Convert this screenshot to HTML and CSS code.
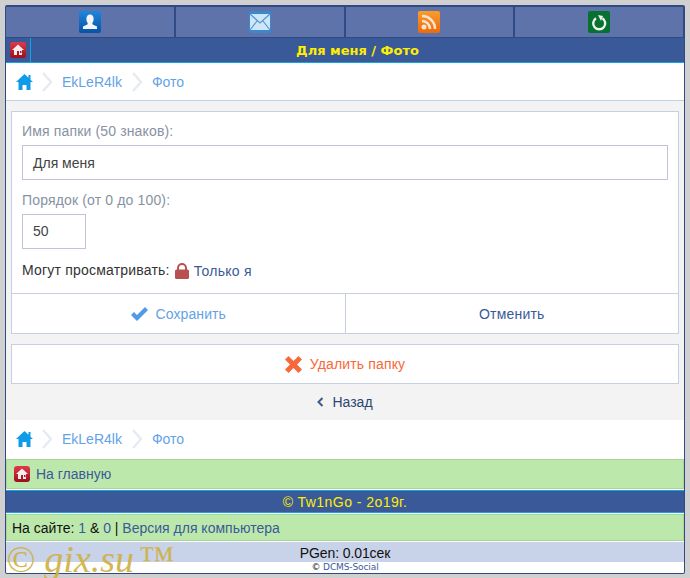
FILE: index.html
```html
<!DOCTYPE html>
<html lang="ru">
<head>
    <meta charset="UTF-8">
    <title>Для меня / Фото</title>
    <link rel="stylesheet" href="styles.css">
</head>
<body>
    <div class="wrapper">
        <div class="top-nav">
            <a class="top-tab">
                <svg width="22" height="22" viewBox="0 0 22 22"><defs><linearGradient id="gUser" x1="0" y1="0" x2="0" y2="1"><stop offset="0" stop-color="#1f86dc"/><stop offset="1" stop-color="#0752a4"/></linearGradient></defs><rect width="22" height="22" rx="2" fill="url(#gUser)"/><ellipse cx="11" cy="8" rx="3.600" ry="4.500" fill="#f4f4f4"/><path d="M9 11h4l.6 2.500 4.400 2v2.500H4v-2.500l4.400-2z" fill="#f4f4f4"/></svg>
            </a>
            <a class="top-tab">
                <svg width="22" height="22" viewBox="0 0 22 22"><rect width="22" height="22" rx="2" fill="#3d87cc"/><rect x="1" y="3" width="20" height="16" fill="#cfe6f8"/><path d="M1 3l10 9 10-9M1 19l7-9M21 19l-7-9" fill="none" stroke="#4f97d8" stroke-width="1.2"/></svg>
            </a>
            <a class="top-tab">
                <svg width="22" height="22" viewBox="0 0 22 22"><defs><linearGradient id="gRss" x1="0" y1="0" x2="0" y2="1"><stop offset="0" stop-color="#fb9c2c"/><stop offset="1" stop-color="#ee6a08"/></linearGradient></defs><rect width="22" height="22" rx="2" fill="url(#gRss)"/><circle cx="6" cy="16" r="2.500" fill="#f4e4d4"/><path d="M4 10a8 8 0 0 1 8 8M4 5a13 13 0 0 1 13 13" fill="none" stroke="#f4e4d4" stroke-width="2.600"/></svg>
            </a>
            <a class="top-tab">
                <svg width="22" height="22" viewBox="0 0 22 22"><rect width="22" height="22" rx="2" fill="#077230"/><path d="M8 7.200a6 6 0 1 0 6.400 0" fill="none" stroke="#eef2ee" stroke-width="2.400"/><path d="M10 4l5 1-2 5z" fill="#eef2ee"/></svg>
            </a>
        </div>
        <div class="title-bar">
            <a class="title-home">
                <svg class="home-icon" width="16" height="16" viewBox="0 0 16 16"><defs><linearGradient id="gHome" x1="0" y1="0" x2="0" y2="1"><stop offset="0" stop-color="#e23a48"/><stop offset="1" stop-color="#9c0f1c"/></linearGradient></defs><rect width="16" height="16" rx="3" fill="url(#gHome)"/><path d="M8 2.500L2 8h2v5h8V8h2z" fill="#f6eeee"/><rect x="7" y="9" width="2" height="4" fill="#b5141f"/><rect x="10" y="9" width="1.500" height="2" fill="#b5141f"/></svg>
            </a>
            <div class="title-text">Для меня / Фото</div>
        </div>
        <div class="crumbs crumbs-top">
            <svg class="crumb-home" width="17" height="16" viewBox="0 0 17 16"><path d="M8.500 0L0 8h2.500v8h4v-5h4v5h4V8H17l-2.500-2.300V1h-2v2.800z" fill="#0f9be8"/></svg>
            <svg class="crumb-sep" width="10" height="20" viewBox="0 0 10 20"><path d="M1 1l8 9-8 9" fill="none" stroke="#e4ebf2" stroke-width="2.400"/></svg>
            <a class="crumb-link">EkLeR4lk</a>
            <svg class="crumb-sep" width="10" height="20" viewBox="0 0 10 20"><path d="M1 1l8 9-8 9" fill="none" stroke="#e4ebf2" stroke-width="2.400"/></svg>
            <a class="crumb-link">Фото</a>
        </div>
        <div class="content">
            <div class="card">
                <div class="fields">
                    <label class="field-label">Имя папки (50 знаков):</label>
                    <div class="input input-wide">Для меня</div>
                    <label class="field-label">Порядок (от 0 до 100):</label>
                    <div class="input input-small">50</div>
                    <div class="access">
                        <span class="access-label">Могут просматривать:</span>
                        <svg class="lock" width="14" height="16" viewBox="0 0 14 16"><path d="M3 7V5a4 4 0 0 1 8 0v2" fill="none" stroke="#b75050" stroke-width="2"/><rect y="6.500" width="14" height="9.500" rx="1.500" fill="#b75050"/></svg>
                        <a class="access-link">Только я</a>
                    </div>
                </div>
                <div class="actions">
                    <a class="action action-save">
                        <svg width="17" height="14" viewBox="0 0 17 14"><path d="M0 8l3-3 3 3 8-8 3 3-11 11z" fill="#4f9be8"/></svg>
                        Сохранить
                    </a>
                    <a class="action action-cancel">Отменить</a>
                </div>
            </div>
            <a class="delete-btn">
                <svg width="17" height="17" viewBox="0 0 17 17"><path d="M3.500 0L8.500 5l5-5L17 3.500l-5 5 5 5-3.500 3.500-5-5-5 5L0 13.500l5-5-5-5z" fill="#f8683a"/></svg>
                Удалить папку
            </a>
            <a class="back-link">
                <svg width="7" height="10" viewBox="0 0 7 10"><path d="M5.500 1l-4 4 4 4" fill="none" stroke="#3c5a8c" stroke-width="2"/></svg>
                Назад
            </a>
        </div>
        <div class="crumbs crumbs-bottom">
            <svg class="crumb-home" width="17" height="16" viewBox="0 0 17 16"><path d="M8.500 0L0 8h2.500v8h4v-5h4v5h4V8H17l-2.500-2.300V1h-2v2.800z" fill="#0f9be8"/></svg>
            <svg class="crumb-sep" width="10" height="20" viewBox="0 0 10 20"><path d="M1 1l8 9-8 9" fill="none" stroke="#e4ebf2" stroke-width="2.400"/></svg>
            <a class="crumb-link">EkLeR4lk</a>
            <svg class="crumb-sep" width="10" height="20" viewBox="0 0 10 20"><path d="M1 1l8 9-8 9" fill="none" stroke="#e4ebf2" stroke-width="2.400"/></svg>
            <a class="crumb-link">Фото</a>
        </div>
        <div class="green-row home-row">
            <svg class="home-icon" width="16" height="16" viewBox="0 0 16 16"><rect width="16" height="16" rx="3" fill="url(#gHome)"/><path d="M8 2.500L2 8h2v5h8V8h2z" fill="#f6eeee"/><rect x="7" y="9" width="2" height="4" fill="#b5141f"/><rect x="10" y="9" width="1.500" height="2" fill="#b5141f"/></svg>
            <a class="blue-link">На главную</a>
        </div>
        <div class="copy-bar">© Tw1nGo - 2o19г.</div>
        <div class="green-row online-row">
            На сайте:&nbsp;<a class="blue-link">1</a>&nbsp;&amp;&nbsp;<a class="blue-link">0</a>&nbsp;|&nbsp;<a class="blue-link">Версия для компьютера</a>
        </div>
        <div class="pgen">PGen: 0.01сек</div>
        <div class="engine">© <a class="blue-link">DCMS-Social</a></div>
    </div>
    <div class="watermark">© gix.su<span class="tm">™</span></div>
</body>
</html>
```

FILE: styles.css
```css
html, body {
    height: 100%;
}
body {
    margin: 0;
    padding: 5px 5px 4px;
    box-sizing: border-box;
    background: #d0d0d0;
    font-family: "Liberation Sans", Arial, sans-serif;
    font-size: 14px;
    color: #222;
    overflow: hidden;
}
a {
    text-decoration: none;
}
svg {
    flex: none;
}
.wrapper {
    border: 1px solid #2f4a85;
    border-top-width: 2px;
    background: #fff;
    border-radius: 2px;
}
.top-nav {
    display: flex;
    height: 31px;
    background: #2f4a85;
    gap: 2px;
    padding: 0 1px 1px 0;
    box-sizing: border-box;
}
.top-tab {
    flex: 1;
    background: #5d73aa;
    display: flex;
    align-items: center;
    justify-content: center;
}
.title-bar {
    display: flex;
    height: 24px;
    background: #3a5998;
    border-bottom: 1px solid #12a5e0;
}
.title-home {
    width: 24px;
    display: flex;
    align-items: center;
    justify-content: center;
    border-right: 1px solid #12a5e0;
}
.title-text {
    flex: 1;
    text-align: center;
    font-family: "DejaVu Sans", sans-serif;
    font-weight: bold;
    font-size: 13px;
    line-height: 25px;
    color: #ffee00;
}
.crumbs {
    display: flex;
    align-items: center;
    height: 37px;
    padding-left: 10px;
    background: #fff;
}
.crumbs-top {
    border-bottom: 1px solid #bfd2e4;
}
.crumb-home {
    margin-right: 9px;
}
.crumb-sep {
    margin-right: 10px;
}
.crumb-link {
    color: #64a2e8;
    margin-right: 10px;
}
.content {
    background: #f3f3f3;
    padding: 10px 5px 0;
}
.card {
    background: #fff;
    border: 1px solid #c6d0e0;
}
.fields {
    padding: 10px 10px 13px;
}
.field-label {
    display: block;
    color: #8792a2;
    line-height: 18px;
    letter-spacing: 0.15px;
}
.input {
    border: 1px solid #c0c4d4;
    height: 33px;
    line-height: 33px;
    padding-left: 10px;
    color: #444;
    margin: 5px 0 11px;
}
.input-wide {
    line-height: 35px;
}
.input-small {
    width: 52px;
    margin-bottom: 13px;
}
.access {
    display: flex;
    align-items: center;
    gap: 5px;
    height: 18px;
    color: #333;
}
.access-label {
    letter-spacing: 0.2px;
    margin-bottom: 3px;
}
.access-link {
    color: #3b5a98;
    letter-spacing: 0.3px;
}
.actions {
    display: flex;
    border-top: 1px solid #c6d0e0;
}
.action {
    flex: 1;
    height: 39px;
    box-sizing: border-box;
    display: flex;
    align-items: center;
    justify-content: center;
    gap: 8px;
}
.action-save {
    color: #64a2e8;
    border-right: 1px solid #c6d0e0;
    letter-spacing: 0.1px;
    padding-top: 1px;
}
.action-cancel {
    color: #3b5a98;
    letter-spacing: 0.2px;
}
.delete-btn {
    display: flex;
    align-items: center;
    justify-content: center;
    gap: 8px;
    height: 38px;
    margin-top: 10px;
    background: #fff;
    border: 1px solid #c6d0e0;
    color: #f8683a;
    letter-spacing: 0.15px;
}
.back-link {
    display: flex;
    align-items: center;
    justify-content: center;
    gap: 8px;
    height: 35px;
    padding-bottom: 1px;
    color: #2c4670;
}
.green-row {
    background: #bde8ac;
    border: 1px solid #a8d698;
    display: flex;
    align-items: center;
}
.home-row {
    height: 27px;
    padding-bottom: 1px;
    gap: 6px;
    padding-left: 7px;
    margin: 2px 0 1px;
}
.home-icon {
    display: block;
}
.blue-link {
    color: #3b5a98;
}
.copy-bar {
    background: #3a5998;
    border-top: 1px solid #12a5e0;
    border-bottom: 1px solid #12a5e0;
    height: 21px;
    line-height: 22px;
    text-align: center;
    color: #ffee00;
    letter-spacing: 0.45px;
}
.online-row {
    height: 25px;
    padding-left: 5px;
    margin: 1px 0;
    color: #111;
}
.pgen {
    background: #c8d2e8;
    height: 20px;
    line-height: 22px;
    text-align: center;
    color: #111;
    letter-spacing: -0.1px;
}
.engine {
    font-family: "DejaVu Sans", sans-serif;
    font-size: 9px;
    letter-spacing: -0.1px;
    line-height: 11px;
    height: 11px;
    text-align: center;
    color: #222;
}
.watermark {
    position: absolute;
    left: 6px;
    top: 534px;
    font-family: "Liberation Serif", serif;
    font-style: italic;
    font-size: 38px;
    line-height: 50px;
    color: #cfb040;
    opacity: 0.9;
    white-space: nowrap;
}
.tm {
    font-style: normal;
    font-size: 36px;
    margin-left: 5px;
    vertical-align: 1px;
}
```
